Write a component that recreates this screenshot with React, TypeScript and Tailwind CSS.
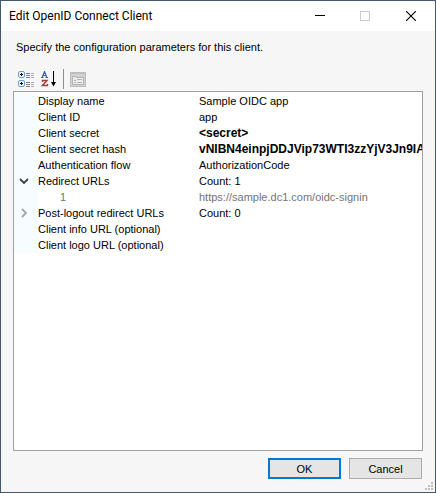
type Row = {
  name: string;
  value?: string;
  bold?: boolean;
  child?: boolean;
  toggle?: "open" | "closed";
};

const rows: Row[] = [
  { name: "Display name", value: "Sample OIDC app" },
  { name: "Client ID", value: "app" },
  { name: "Client secret", value: "<secret>", bold: true },
  { name: "Client secret hash", value: "vNIBN4einpjDDJVip73WTI3zzYjV3Jn9IA", bold: true },
  { name: "Authentication flow", value: "AuthorizationCode" },
  { name: "Redirect URLs", value: "Count: 1", toggle: "open" },
  { name: "1", value: "https://sample.dc1.com/oidc-signin", child: true },
  { name: "Post-logout redirect URLs", value: "Count: 0", toggle: "closed" },
  { name: "Client info URL (optional)" },
  { name: "Client logo URL (optional)" },
];

function TitleBar() {
  return (
    <header className="flex h-[30px] shrink-0 items-center bg-white pl-2">
      <h1 className="flex-1 whitespace-nowrap font-[Roboto,sans-serif] text-[12px]">Edit OpenID Connect Client</h1>
      <div className="flex h-full">
        <button type="button" aria-label="Minimize" className="flex w-[46px] items-center justify-center">
          <svg width="10" height="10" shapeRendering="crispEdges">
            <path d="M0 4.5h10" stroke="#000" />
          </svg>
        </button>
        <button type="button" aria-label="Maximize" disabled className="flex w-[44px] items-center justify-center">
          <svg width="10" height="10" shapeRendering="crispEdges">
            <rect x="0.5" y="0.5" width="9" height="9" fill="none" stroke="#ccc" />
          </svg>
        </button>
        <button type="button" aria-label="Close" className="flex w-[48px] items-center justify-center">
          <svg width="10" height="10">
            <path d="M0 0l10 10M10 0l-10 10" stroke="#000" strokeWidth="1.1" />
          </svg>
        </button>
      </div>
    </header>
  );
}

function CategorizedIcon() {
  return (
    <svg width="17" height="16" viewBox="0 0 17 16">
      <rect x="0.5" y="0.5" width="6" height="6" rx="1.5" fill="#eef6fd" stroke="#6aa0cd" />
      <rect x="0.5" y="9.5" width="6" height="6" rx="1.5" fill="#eef6fd" stroke="#6aa0cd" />
      <path d="M2 3.5h3M3.5 2v3M2 12.5h3M3.5 11v3" stroke="#111" />
      <path d="M8 2.5h4M8 4.5h4M8 6.5h4M8 11.5h4M8 13.5h4M8 15.5h4" stroke="#7c8088" />
      <path d="M13 2.5h3M13 4.5h3M13 6.5h3M13 11.5h3M13 13.5h3M13 15.5h3" stroke="#a9adb8" />
    </svg>
  );
}

function AlphabeticalIcon() {
  return (
    <svg width="16" height="16" viewBox="0 0 16 16">
      <path d="M1.2 6.5L3.5 0.5L5.8 6.5M2 4.5h3M0 6.5h2.5M4.5 6.5h2.5" fill="none" stroke="#3a5fae" strokeWidth="1.2" />
      <path d="M1.5 11V9.5h4.5L1.5 14.5H6.5V13" fill="none" stroke="#a83a3a" strokeWidth="1.4" />
      <path d="M12.5 0v13" stroke="#000" />
      <path d="M10 11h5l-2.5 4.5z" fill="#000" />
    </svg>
  );
}

function PagesIcon() {
  return (
    <svg width="16" height="15" viewBox="0 0 16 15">
      <rect x="0.5" y="0.5" width="15" height="14" fill="#d2d2d2" stroke="#bcbcbc" />
      <path d="M1 1.5h14" stroke="#c0c0c0" />
      <path d="M2.5 4.5h4v1h7v7h-11z" fill="#ececec" stroke="#b2b2b2" />
      <path d="M4 8.5h2M7 7.5h5M4 10.5h2M7 10.5h5" stroke="#b4b4b4" />
    </svg>
  );
}

function Toolbar() {
  return (
    <div role="toolbar" aria-label="Property grid" className="mt-3 flex h-6 items-center pl-[5px]">
      <button type="button" aria-label="Categorized" className="mr-[6px]">
        <CategorizedIcon />
      </button>
      <button type="button" aria-label="Alphabetical">
        <AlphabeticalIcon />
      </button>
      <span className="mx-[6px] h-5 w-px bg-[#8f8f8f]" />
      <button type="button" aria-label="Property pages" disabled>
        <PagesIcon />
      </button>
    </div>
  );
}

function Toggle({ row }: { row: Row }) {
  const open = row.toggle === "open";
  return (
    <button type="button" aria-label={row.name} aria-expanded={open} className="flex h-4 w-5 items-center justify-center">
      {open ? (
        <svg width="10" height="10" fill="none">
          <path d="M1 3l4 4l4-4" stroke="#404040" strokeWidth="1.8" />
        </svg>
      ) : (
        <svg width="10" height="10" fill="none">
          <path d="M3 1l4 4l-4 4" stroke="#a6a6a6" strokeWidth="1.8" />
        </svg>
      )}
    </button>
  );
}

function PropertyGrid() {
  return (
    <div className="flex-1 overflow-hidden border border-[#a0a0a0] bg-white pt-px">
      <table className="w-full table-fixed border-collapse">
        <colgroup>
          <col className="w-[24px]" />
          <col className="w-[161px]" />
          <col />
        </colgroup>
        <tbody>
          {rows.map((row) => (
            <tr key={row.name} className={row.child ? "h-4 text-[#747474]" : "h-4"}>
              <td className="bg-[#f7fcff] p-0">{row.toggle && <Toggle row={row} />}</td>
              <th scope="row" className={row.child ? "whitespace-nowrap p-0 pl-[22px] text-left font-normal" : "whitespace-nowrap p-0 text-left font-normal"}>
                {row.name}
              </th>
              <td className={row.bold ? "overflow-hidden whitespace-nowrap p-0 text-[12px] leading-4 font-bold" : "overflow-hidden whitespace-nowrap p-0"}>
                {row.value}
              </td>
            </tr>
          ))}
        </tbody>
      </table>
    </div>
  );
}

export default function App() {
  return (
    <main className="flex min-h-screen flex-col border border-[#44586f] bg-[#f6f6f6] font-['Liberation_Sans',Arial,sans-serif] text-[11px] leading-4 text-black">
      <TitleBar />
      <div className="flex flex-1 flex-col px-3 pt-2">
        <p className="pl-[3px]">Specify the configuration parameters for this client.</p>
        <Toolbar />
        <PropertyGrid />
      </div>
      <footer className="relative flex justify-end gap-2 px-[13px] pb-[13px] pt-[7px]">
        <button type="submit" className="h-[21px] w-[73px] border-2 border-[#0078d7] bg-[#e5e5e5] leading-4">
          OK
        </button>
        <button type="button" className="h-[21px] w-[73px] border border-[#adadad] bg-[#e5e5e5] leading-4">
          Cancel
        </button>
        <svg width="8" height="8" className="absolute bottom-[2px] right-[2px]" fill="#bfbfbf">
          <path d="M6 0h2v2h-2zM3 3h2v2h-2zM6 3h2v2h-2zM0 6h2v2h-2zM3 6h2v2h-2zM6 6h2v2h-2z" />
        </svg>
      </footer>
    </main>
  );
}
